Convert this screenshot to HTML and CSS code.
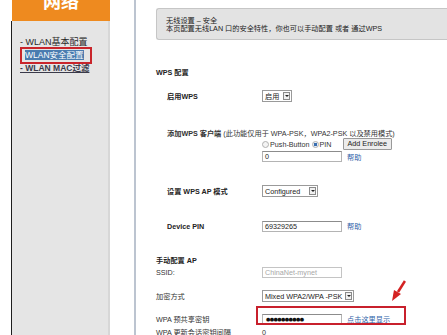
FILE: index.html
```html
<!DOCTYPE html>
<html lang="zh">
<head>
  <meta charset="UTF-8">
  <title>无线设置 - 安全</title>
  <link rel="stylesheet" href="styles.css">
</head>
<body>
  <div class="page">
    <aside class="side">
      <div class="brand"><span>网络</span></div>
      <div class="menu">
        <a class="item">- WLAN基本配置</a>
        <a class="item active"><span>WLAN安全配置</span></a>
        <a class="item under">- WLAN MAC过滤</a>
      </div>
    </aside>

    <div class="wrap">
      <div class="topbar"></div>
      <div class="body">
        <div class="gutter"></div>
        <div class="content">
          <div class="info">
            无线设置 – 安全<br>
            本页配置无线LAN 口的安全特性，你也可以手动配置 或者 通过WPS
          </div>

          <div class="title t-wps">WPS 配置</div>

          <div class="row sub r-enable">
            <div class="lbl b">启用WPS</div>
            <span class="sel w-en">启用<i class="arr"></i></span>
          </div>

          <div class="line sub r-client"><b>添加WPS 客户端</b> (此功能仅用于 WPA-PSK，WPA2-PSK 以及禁用模式)</div>
          <div class="row sub r-radio">
            <div class="lbl"></div>
            <span class="radio"></span>Push-Button
            <span class="radio on"></span>PIN
            <span class="btn">Add Enrolee</span>
          </div>
          <div class="row sub r-pin">
            <div class="lbl"></div>
            <span class="inp">0</span>
            <a class="link">帮助</a>
          </div>

          <div class="row sub r-mode">
            <div class="lbl b">设置 WPS AP 模式</div>
            <span class="sel w-cfg">Configured<i class="arr"></i></span>
          </div>

          <div class="row sub r-dev">
            <div class="lbl b">Device PIN</div>
            <span class="inp">69329265</span>
            <a class="link">帮助</a>
          </div>

          <div class="title t-man">手动配置 AP</div>
          <div class="row r-ssid">
            <div class="lbl">SSID:</div>
            <span class="inp off">ChinaNet-mynet</span>
          </div>
          <div class="row r-enc">
            <div class="lbl">加密方式</div>
            <span class="sel w-mix">Mixed WPA2/WPA -PSK<i class="arr"></i></span>
          </div>
          <div class="row r-psk">
            <div class="lbl">WPA 预共享密钥</div>
            <span class="inp dots">●●●●●●●●●●</span>
            <a class="link u">点击这里显示</a>
          </div>
          <div class="row r-key">
            <div class="lbl">WPA 更新会话密钥间隔</div>
            <span>0</span>
          </div>

          <div class="mark"></div>
          <svg class="arrow" width="14" height="22" viewBox="0 0 14 22">
            <path d="M13 1 L6 12" stroke="#d42222" stroke-width="2.6" fill="none"/>
            <polygon points="0,21 2,10 9,14" fill="#d42222"/>
          </svg>
        </div>
      </div>
    </div>
  </div>
</body>
</html>
```

FILE: styles.css
```css
body {
  margin: 0;
  font-family: "Liberation Sans", "Noto Sans CJK SC", sans-serif;
  font-size: 7.2px;
  color: #333;
  background: #fff;
}
.page {
  display: flex;
  height: 335px;
  overflow: hidden;
}
.side {
  width: 99px;
  margin-left: 11px;
  display: flex;
  flex-direction: column;
}
.brand {
  height: 21px;
  margin-left: 1px;
  background: #ee8a1f;
  overflow: hidden;
  text-align: center;
}
.brand span {
  display: block;
  margin-top: -7px;
  font-size: 18px;
  line-height: 18px;
  font-weight: bold;
  color: #fff;
}
.menu {
  flex: 1;
  display: flex;
  flex-direction: column;
  padding-top: 15px;
  background: #e5e5e5;
  border-left: 1px solid #1e1e1e;
  border-right: 2px solid #d7d7d7;
}
.item {
  font-size: 9px;
  line-height: 13px;
  padding-left: 8px;
  color: #2a2a2a;
}
.item.active {
  align-self: flex-start;
  margin: -2px 0 -2px 8px;
  padding: 2px 6px 2px 3px;
  line-height: 9px;
  font-size: 8.5px;
  border: 2px solid #c9252b;
}
.item.active span {
  background: #4a7cb0;
  color: #fff;
}
.item.under {
  text-decoration: underline;
  font-size: 8.5px;
  font-weight: bold;
  color: #3a3a4a;
}
.wrap {
  flex: 1;
  display: flex;
  flex-direction: column;
}
.topbar {
  height: 3px;
  background: linear-gradient(to right, #ee8a1f 52px, #a8d2ea 52px, #a8d2ea 103px, #ee8a1f 103px);
}
.body {
  flex: 1;
  display: flex;
}
.gutter {
  width: 24px;
  border-right: 2px solid #bcc4d0;
}
.content {
  flex: 1;
  position: relative;
  padding: 8px 0 0 20px;
  overflow: hidden;
}
.info {
  height: 16px;
  padding: 8px 0 6px 9px;
  line-height: 8px;
  background: #e3e3e3;
  border: 1px solid #c6c6c6;
  border-right: none;
  border-radius: 3px 0 0 3px;
  color: #222;
}
.title {
  height: 10px;
  line-height: 10px;
  font-weight: bold;
  color: #222;
}
.t-wps { margin-top: 28px; }
.t-man { margin-top: 24px; }
.row {
  display: flex;
  align-items: center;
  height: 12px;
}
.lbl {
  width: 106px;
  flex-shrink: 0;
}
.sub { padding-left: 11px; }
.sub .lbl { width: 95px; }
.b { font-weight: bold; color: #222; }
.line {
  height: 10px;
  line-height: 10px;
}
.r-enable { margin-top: 12px; }
.r-client { margin-top: 27px; }
.r-radio { height: 10px; }
.r-pin { margin-top: 2px; height: 11px; }
.r-mode { margin-top: 23px; }
.r-dev { margin-top: 23px; }
.r-ssid { margin-top: 1px; height: 11px; }
.r-enc { margin-top: 12px; }
.r-psk { margin-top: 11px; }
.r-key { margin-top: 2px; height: 10px; }

.sel {
  display: flex;
  align-items: center;
  justify-content: space-between;
  height: 10px;
  padding-left: 2px;
  border: 1px solid #9a9a9a;
  background: #fff;
  color: #222;
  box-sizing: content-box;
}
.w-en { width: 26px; }
.w-cfg { width: 52px; }
.w-mix { width: 88px; }
.arr {
  width: 7px;
  height: 8px;
  margin: 0 1px;
  border: 1px solid #8a8a8a;
  background: #f0f0f0;
  position: relative;
  box-sizing: border-box;
}
.arr::after {
  content: "";
  position: absolute;
  left: 1px;
  top: 2px;
  border-left: 2px solid transparent;
  border-right: 2px solid transparent;
  border-top: 2px solid #222;
}
.inp {
  width: 76px;
  height: 9px;
  line-height: 9px;
  padding-left: 2px;
  border: 1px solid #b4b4b4;
  border-top-color: #8c8c8c;
  background: #fff;
  color: #222;
}
.inp.off { color: #a8a8a8; border-color: #c4c4c4; }
.inp.dots {
  font-family: "DejaVu Sans", sans-serif;
  font-size: 5px;
  letter-spacing: -0.6px;
  padding-left: 3px;
  width: 75px;
  color: #111;
}
.link {
  margin-left: 5px;
  color: #2f63a8;
}
.link.u { text-decoration: underline; }
.radio {
  width: 5px;
  height: 5px;
  margin: 0 1px 0 0;
  border: 1px solid #b0b0b0;
  border-radius: 50%;
  background: #f4f4f4;
}
.radio.on {
  margin-left: 2px;
  background: radial-gradient(circle, #3a6fb0 45%, #e8eef6 55%);
}
.btn {
  margin-left: 11px;
  padding: 0 4px;
  height: 10px;
  line-height: 10px;
  border: 1px solid #999;
  border-radius: 1px;
  background: #ececec;
  color: #222;
}
.mark {
  position: absolute;
  left: 120px;
  top: 306px;
  width: 146px;
  height: 15px;
  border: 2px solid #c8202c;
}
.arrow {
  position: absolute;
  left: 256px;
  top: 280px;
}
```
